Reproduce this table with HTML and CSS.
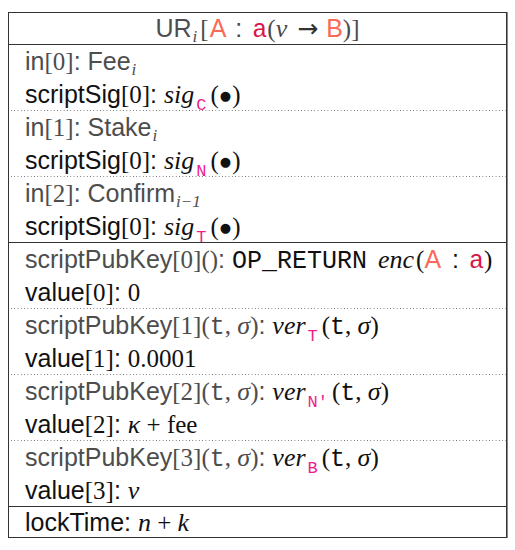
FILE: index.html
```html
<!DOCTYPE html>
<html>
<head>
<meta charset="utf-8">
<link rel="stylesheet" href="styles.css">
</head>
<body>
<div class="tx">
  <div class="head">
    <span class="g">UR</span><span class="sub mi g">i</span><span class="m br">[</span><span class="salmon">A</span><span class="sp">:</span><span class="tt crimson">a</span><span class="m">(</span><span class="mi">v</span><span class="arrow">&#8594;</span><span class="salmon">B</span><span class="m">)]</span>
  </div>

  <div class="sec">
    <div class="ln g">in<span class="m">[0]</span>: Fee<span class="sub mi">i</span></div>
    <div class="ln k">scriptSig<span class="m">[0]</span>: <span class="mi">sig</span><span class="tsub">C</span><span class="m">(<span class="dot">&#9679;</span>)</span></div>
  </div>
  <div class="sec dotted">
    <div class="ln g">in<span class="m">[1]</span>: Stake<span class="sub mi">i</span></div>
    <div class="ln k">scriptSig<span class="m">[0]</span>: <span class="mi">sig</span><span class="tsub">N</span><span class="m">(<span class="dot">&#9679;</span>)</span></div>
  </div>
  <div class="sec dotted">
    <div class="ln g">in<span class="m">[2]</span>: Confirm<span class="sub mi">i<span class="m">&#8722;1</span></span></div>
    <div class="ln k">scriptSig<span class="m">[0]</span>: <span class="mi">sig</span><span class="tsub">T</span><span class="m">(<span class="dot">&#9679;</span>)</span></div>
  </div>

  <div class="sec solid">
    <div class="ln g">scriptPubKey<span class="m">[0]()</span>: <span class="tt k">OP_RETURN</span> <span class="mi k enc">enc</span><span class="m k">(</span><span class="salmon">A</span><span class="k colon">:</span><span class="tt crimson">a</span><span class="m k">)</span></div>
    <div class="ln k">value<span class="m">[0]</span>: <span class="m">0</span></div>
  </div>
  <div class="sec dotted">
    <div class="ln g">scriptPubKey<span class="m">[1](</span><span class="tt">t</span><span class="m">, </span><span class="mi">&#963;</span><span class="m">)</span>: <span class="mi k">ver</span><span class="tsub">T</span><span class="m k">(</span><span class="tt k">t</span><span class="m k">, </span><span class="mi k">&#963;</span><span class="m k">)</span></div>
    <div class="ln k">value<span class="m">[1]</span>: <span class="m">0.0001</span></div>
  </div>
  <div class="sec dotted">
    <div class="ln g">scriptPubKey<span class="m">[2](</span><span class="tt">t</span><span class="m">, </span><span class="mi">&#963;</span><span class="m">)</span>: <span class="mi k">ver</span><span class="tsub">N&#8242;</span><span class="m k">(</span><span class="tt k">t</span><span class="m k">, </span><span class="mi k">&#963;</span><span class="m k">)</span></div>
    <div class="ln k">value<span class="m">[2]</span>: <span class="mi">&#954;</span><span class="m"> + fee</span></div>
  </div>
  <div class="sec dotted">
    <div class="ln g">scriptPubKey<span class="m">[3](</span><span class="tt">t</span><span class="m">, </span><span class="mi">&#963;</span><span class="m">)</span>: <span class="mi k">ver</span><span class="tsub">B</span><span class="m k">(</span><span class="tt k">t</span><span class="m k">, </span><span class="mi k">&#963;</span><span class="m k">)</span></div>
    <div class="ln k">value<span class="m">[3]</span>: <span class="mi">v</span></div>
  </div>

  <div class="sec solid last">
    <div class="ln k">lockTime: <span class="mi">n</span><span class="m"> + </span><span class="mi">k</span></div>
  </div>
</div>
</body>
</html>
```

FILE: styles.css
```css
html, body {
  margin: 0;
  padding: 0;
  background: #ffffff;
}

.tx {
  margin: 12px 0 0 8px;
  width: 497px;
  border: 1px solid #333333;
  box-shadow: 1px 0 0 #8a8a8a;
  font-family: "Liberation Sans", Arial, sans-serif;
  font-size: 25px;
  color: #111111;
}

.head {
  height: 31px;
  line-height: 31px;
  text-align: center;
  color: #4a4a4a;
  border-bottom: 1px solid #333333;
  white-space: nowrap;
}

.sec {
  padding: 0 0 0 16px;
}

.sec.solid {
  border-top: 1px solid #333333;
}

.sec.dotted {
  padding-top: 1px;
  background-image: linear-gradient(to right, #6a6a6a 0, #6a6a6a 1px, transparent 1px);
  background-size: 3.3px 1px;
  background-repeat: repeat-x;
  background-position: 2px 0;
}

.ln {
  height: 32.5px;
  line-height: 32.5px;
  white-space: nowrap;
}

.sec.last .ln {
  height: 30px;
  line-height: 30px;
}

.g { color: #4d4d4d; }
.k { color: #111111; }

.m {
  font-family: "Liberation Serif", "Times New Roman", serif;
  font-size: 25px;
}

.mi {
  font-family: "Liberation Serif", "Times New Roman", serif;
  font-style: italic;
  font-size: 26px;
}

.tt {
  font-family: "Liberation Mono", "Courier New", monospace;
  font-size: 25px;
}

.sub {
  font-size: 17px;
  vertical-align: -5px;
  line-height: 0;
  margin-left: 1px;
}

.sub .m {
  font-size: 17px;
}

.tsub {
  font-family: "Liberation Mono", "Courier New", monospace;
  font-size: 17px;
  color: #ec1d8c;
  vertical-align: -7px;
  line-height: 0;
  margin: 0 4px 0 2px;
}

.dot {
  font-family: "DejaVu Sans", sans-serif;
  font-size: 13px;
  vertical-align: 3px;
  padding: 0 1px;
}

.salmon { color: #fa6a5a; }
.crimson { color: #d8174a; }

.br { margin-left: 3px; margin-right: 1px; }
.sp { color: #4a4a4a; padding: 0 10px 0 9px; }

.enc { margin-left: 4px; margin-right: 2px; }
.colon { padding: 0 10px 0 11px; }

.arrow {
  font-family: "DejaVu Sans", sans-serif;
  font-size: 25px;
  padding: 0 8px 0 10px;
  color: #333333;
}
```
